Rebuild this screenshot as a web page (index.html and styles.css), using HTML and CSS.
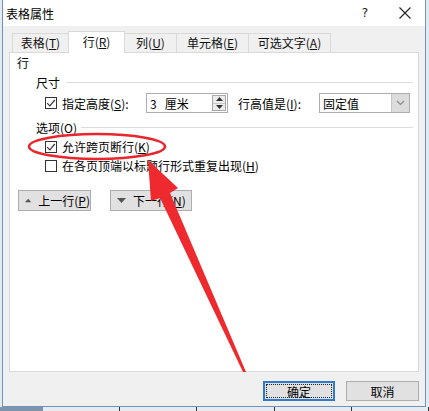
FILE: index.html
```html
<!DOCTYPE html>
<html lang="zh-CN">
<head>
<meta charset="utf-8">
<link rel="stylesheet" href="styles.css">
</head>
<body>
<div class="screen">
  <div class="window">
    <div class="titlebar">
      <span class="title">表格属性</span>
      <span class="help">?</span>
      <span class="close">
        <svg width="14" height="14" viewBox="0 0 14 14"><path d="M1.5 1.5 L12.5 12.5 M12.5 1.5 L1.5 12.5" stroke="#222" stroke-width="1.1" fill="none"/></svg>
      </span>
    </div>
    <div class="client">
      <div class="tabs">
        <div class="tab t1">表格(<u>T</u>)</div>
        <div class="tab t2 active">行(<u>R</u>)</div>
        <div class="tab t3">列(<u>U</u>)</div>
        <div class="tab t4">单元格(<u>E</u>)</div>
        <div class="tab t5">可选文字(<u>A</u>)</div>
      </div>
      <div class="panel">
        <div class="head0">行</div>
        <div class="group"><span>尺寸</span></div>
        <div class="sizerow">
          <span class="cb"><svg width="12" height="12" viewBox="0 0 12 12"><path d="M2.2 6.2 L4.8 8.8 L9.8 3" stroke="#333" stroke-width="1.2" fill="none"/></svg></span>
          <span class="lbl1">指定高度(<u>S</u>):</span>
          <span class="spin">
            <span class="spintext"><span class="num">3</span>厘米</span>
            <span class="spinbtn">
              <span class="up"><svg width="7" height="4" viewBox="0 0 7 4"><path d="M0 4 L3.5 0 L7 4Z" fill="#333"/></svg></span>
              <span class="down"><svg width="7" height="4" viewBox="0 0 7 4"><path d="M0 0 L3.5 4 L7 0Z" fill="#333"/></svg></span>
            </span>
          </span>
          <span class="lbl2">行高值是(<u>I</u>):</span>
          <span class="select">
            <span class="seltext">固定值</span>
            <span class="selbtn"><svg width="9" height="6" viewBox="0 0 9 6"><path d="M1 1 L4.5 4.5 L8 1" stroke="#8a8a8a" stroke-width="1.2" fill="none"/></svg></span>
          </span>
        </div>
        <div class="group g2"><span>选项(O)</span></div>
        <div class="chkrow">
          <span class="cb"><svg width="12" height="12" viewBox="0 0 12 12"><path d="M2.2 6.2 L4.8 8.8 L9.8 3" stroke="#333" stroke-width="1.2" fill="none"/></svg></span>
          <span>允许跨页断行(<u>K</u>)</span>
        </div>
        <div class="chkrow">
          <span class="cb"></span>
          <span>在各页顶端以标题行形式重复出现(<u>H</u>)</span>
        </div>
        <div class="navrow">
          <button class="btn nav b1"><svg width="9" height="5" viewBox="0 0 9 5"><path d="M0 5 L4.5 0 L9 5Z" fill="#555"/></svg><span class="bt">上一行(<u>P</u>)</span></button>
          <button class="btn nav b2"><svg width="9" height="5" viewBox="0 0 9 5"><path d="M0 0 L4.5 5 L9 0Z" fill="#555"/></svg><span class="bt">下一行(<u>N</u>)</span></button>
        </div>
      </div>
      <div class="footer">
        <button class="btn ok"><span class="focus">确定</span></button>
        <button class="btn cancel">取消</button>
      </div>
    </div>
    <svg class="overlay" width="429" height="411" viewBox="0 0 429 411">
      <ellipse cx="97" cy="146.5" rx="68" ry="12.5" fill="none" stroke="#e8262c" stroke-width="2.6"/>
      <path d="M148 160 L178 188 L170 193 L246 372 L243 372 L160 198 L151 201 Z" fill="#ee2a2e"/>
    </svg>
  </div>
  <div class="taskbar">
    <span class="seg s0"></span><span class="seg"></span><span class="seg"></span><span class="seg"></span><span class="seg"></span><span class="seg"></span>
  </div>
</div>
</body>
</html>
```
FILE: styles.css
```css
* { box-sizing: border-box; }
html, body { margin: 0; padding: 0; }
body {
  width: 429px;
  height: 411px;
  overflow: hidden;
  background: #e3eaf1;
  font-family: "Noto Sans CJK SC", "Noto Sans", sans-serif;
  font-size: 12px;
  color: #000;
  white-space: nowrap;
}
u { text-decoration: underline; text-underline-offset: 1px; }
.screen { width: 429px; height: 411px; display: flex; flex-direction: column; }
.window {
  position: relative;
  margin-left: 2px;
  width: 424px;
  height: 407px;
  border-left: 1px solid #6f93bf;
  border-right: 1px solid #6f93bf;
  border-bottom: 1px solid #6f93bf;
  background: #f0f0f0;
  display: flex;
  flex-direction: column;
}
.titlebar {
  height: 26px;
  background: #ffffff;
  display: flex;
  align-items: center;
  padding-left: 3px;
}
.title { font-size: 12px; line-height: 16px; margin-top: 1px; }
.help { margin-left: auto; font-family: "DejaVu Sans", sans-serif; font-size: 12px; margin-right: 30px; color: #222; }
.close { width: 14px; height: 14px; margin-right: 13px; display: flex; }
.client { padding: 5px 6px 0 6px; display: flex; flex-direction: column; }
.tabs { height: 21px; display: flex; align-items: flex-end; padding-left: 3px; }
.tab {
  height: 19px;
  border: 1px solid #d9d9d9;
  border-bottom: none;
  background: #f0f0f0;
  margin-right: -1px;
  display: flex;
  align-items: center;
  justify-content: center;
  font-size: 12px;
  line-height: 14px;
  color: #111;
}
.tab.active {
  height: 22px;
  background: #ffffff;
  margin-bottom: -1px;
  position: relative;
  z-index: 1;
  padding-bottom: 2px;
}
.t1 { width: 57px; }
.t2 { width: 57px; }
.t3 { width: 53px; }
.t4 { width: 73px; }
.t5 { width: 83px; }
.panel {
  width: 410px;
  height: 320px;
  background: #ffffff;
  border: 1px solid #d9d9d9;
  display: flex;
  flex-direction: column;
}
.head0 { height: 19px; line-height: 19px; padding-left: 7px; }
.group {
  height: 20px;
  display: flex;
  align-items: center;
  padding-left: 26px;
  padding-right: 5px;
}
.group::after {
  content: "";
  flex: 1;
  height: 1px;
  background: #dcdcdc;
  margin-left: 6px;
}
.g2 { margin-top: 5px; height: 19px; }
.g2::after { margin-left: 4px; }
.sizerow { height: 20px; display: flex; align-items: center; padding-left: 35px; margin-top: 1px; }
.cb {
  width: 12px;
  height: 12px;
  border: 1px solid #333;
  background: #fff;
  display: flex;
  align-items: center;
  justify-content: center;
  flex: none;
}
.cb svg { flex: none; }
.lbl1 { margin-left: 5px; width: 84px; flex: none; }
.spin {
  width: 82px;
  height: 20px;
  border: 1px solid #abadb3;
  display: flex;
  align-items: center;
  padding-left: 3px;
  flex: none;
}
.spintext { flex: 1; }
.num { margin-right: 8px; }
.spinbtn {
  width: 14px;
  height: 16px;
  margin-right: 1px;
  display: flex;
  flex-direction: column;
  border: 1px solid #a8a8a8;
  background: #ececec;
}
.spinbtn .up, .spinbtn .down { flex: 1; display: flex; align-items: center; justify-content: center; }
.spinbtn .up { border-bottom: 1px solid #c8c8c8; }
.lbl2 { margin-left: 10px; width: 81px; flex: none; }
.select {
  width: 91px;
  height: 20px;
  border: 1px solid #abadb3;
  display: flex;
  align-items: center;
  padding-left: 3px;
  flex: none;
}
.seltext { flex: 1; }
.selbtn {
  width: 18px;
  height: 18px;
  background: #dcdcdc;
  border-left: 1px solid #c6c6c6;
  display: flex;
  align-items: center;
  justify-content: center;
}
.chkrow { height: 19px; display: flex; align-items: center; padding-left: 35px; gap: 5px; }
.navrow { margin-top: 15px; display: flex; padding-left: 8px; gap: 19px; }
.btn {
  font-family: "Noto Sans CJK SC", "Noto Sans", sans-serif;
  font-size: 12px;
  color: #000;
  background: #e1e1e1;
  border: 1px solid #adadad;
  height: 21px;
  padding: 0;
  margin: 0;
  display: flex;
  align-items: center;
  justify-content: center;
  white-space: nowrap;
}
.nav { justify-content: flex-start; padding-left: 6px; gap: 7px; }
.bt { white-space: nowrap; }
.b1 { width: 73px; }
.b2 { width: 82px; }
.footer { display: flex; justify-content: flex-end; margin-top: 9px; gap: 11px; }
.ok { width: 72px; height: 20px; border: 2px solid #2f7bd0; padding: 1px; }
.ok .focus { width: 100%; height: 100%; border: 1px dotted #222; display: flex; align-items: center; justify-content: center; }
.cancel { width: 73px; height: 20px; }
.overlay { position: absolute; left: -3px; top: 0; pointer-events: none; }
.taskbar { height: 4px; display: flex; background: #e7ebef; }
.seg { width: 79px; border-right: 1px solid #333; }
.s0 { width: 44px; background: #7f93aa; border-right: none; }
```
